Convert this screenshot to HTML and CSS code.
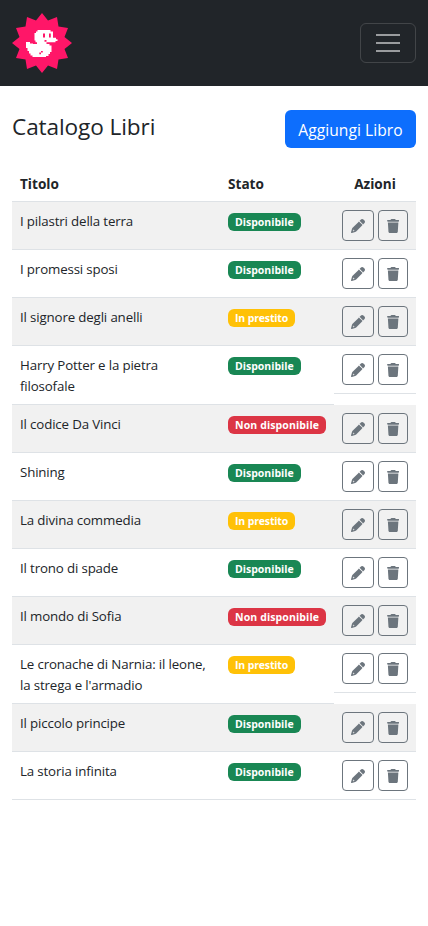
FILE: index.html
```
<!DOCTYPE html>
<html lang="it">
<head>
<meta charset="utf-8">
<meta name="viewport" content="width=device-width, initial-scale=1">
<title>Catalogo Libri</title>
<link rel="stylesheet" href="styles.css">
</head>
<body>
<svg class="defs" aria-hidden="true">
  <symbol id="pencil" viewBox="0 0 512 512"><path d="M410.3 231l11.3-11.3-33.9-33.9-62.1-62.1L291.7 89.8l-11.3 11.3-22.6 22.6L58.6 322.9c-10.4 10.4-18 23.3-22.2 37.4L1 480.7c-2.5 8.4-.2 17.5 6.1 23.7s15.3 8.5 23.7 6.1l120.3-35.4c14.1-4.2 27-11.8 37.4-22.2L387.7 253.7 410.3 231zM130 425l-9 14-40 12-15-15 12-40 14-9v38h38zM362.7 18.7L348.3 33.2 325.7 55.8 314.3 67.1l33.9 33.9 62.1 62.1 33.9 33.9 11.3-11.3 22.6-22.6 14.5-14.5c25-25 25-65.5 0-90.5L453.3 18.7c-25-25-65.5-25-90.5 0z"/></symbol>
  <symbol id="trash" viewBox="0 0 448 512"><path d="M135.2 17.7L128 32H32C14.3 32 0 46.3 0 64S14.3 96 32 96H416c17.7 0 32-14.3 32-32s-14.3-32-32-32H320l-7.2-14.3C307.4 6.8 296.3 0 284.2 0H163.8c-12.1 0-23.2 6.8-28.6 17.7zM416 128H32L53.2 467c1.6 25.3 22.6 45 47.9 45H346.9c25.3 0 46.3-19.7 47.9-45L416 128z"/></symbol>
</svg>
<nav class="navbar">
  <svg class="logo" viewBox="0 0 60 60">
    <path fill="#ff1668" d="M30 0L36 7.5L45 4L46.500 13.500L56 15L52.500 24L60 30L52.500 36L56 45L46.500 46.500L45 56L36 52.500L30 60L24 52.500L15 56L13.500 46.500L4 45L7.500 36L0 30L7.500 24L4 15L13.500 13.500L15 4L24 7.500Z"/>
    <path fill="#fff" fill-rule="evenodd" d="M25.500 17H38.500V18.500H41V24.800H44V26.200H45.500V28H43.500V29.200H34.500V31H37.500V32.500H39.500V39H38V41H36.500V43H34V44H20.500V42.500H18.500V40.500H17V38H15.500V35H14V29H18V30.500H21V31H25V29.200H23.500V27.500H22.500V20H24V18.500H25.500ZM31 20.500V24.500H33V20.500ZM37 20.500V24.500H38.800V20.500ZM32.500 27V28.800H34.500V27ZM29 38V39.500H30.800V38ZM27.300 39.500V41.200H29V39.500Z"/>
  </svg>
  <button class="toggler" aria-label="Menu"><svg viewBox="0 0 30 30"><path d="M3 7h24M3 15h24M3 23h24"/></svg></button>
</nav>
<main class="container">
  <header class="heading"><h1>Catalogo Libri</h1><button class="add">Aggiungi Libro</button></header>
  <table>
    <thead><tr><th class="c-title">Titolo</th><th class="c-state">Stato</th><th class="c-act">Azioni</th></tr></thead>
    <tbody id="rows"></tbody>
  </table>
</main>
<script src="app.js"></script>
</body>
</html>
```
FILE: styles.css
```
* { box-sizing: border-box; }
body { margin: 0; background: #fff; color: #212529; font: 13.3px/21px "Open Sans", sans-serif; }
.defs { display: none; }
.navbar { display: flex; align-items: center; justify-content: space-between; height: 86px; padding: 0 12px; background: #212529; }
.logo { width: 60px; height: 60px; }
.toggler { display: flex; padding: 4px 12px; width: 56px; height: 40px; background: none; border: 1px solid rgba(255,255,255,.15); border-radius: 6px; }
.toggler svg { width: 30px; height: 30px; stroke: rgba(255,255,255,.55); stroke-width: 2; }
.container { padding: 24px 12px 0; }
.heading { display: flex; justify-content: space-between; height: 38px; margin-bottom: 16px; }
h1 { margin: 0; font-size: 22.6px; line-height: 33px; font-weight: 400; letter-spacing: -.1px; }
.add { width: 131px; height: 38px; padding: 2px 0 0; border: 0; border-radius: 6px; background: #0d6efd; color: #fff; font: 15.6px/24px "Open Sans", sans-serif; letter-spacing: .05px; white-space: nowrap; }
table { width: 404px; table-layout: fixed; border-collapse: separate; border-spacing: 0; }
th, td { padding: 9px 8px 7px; text-align: left; vertical-align: top; border-bottom: 1px solid #dee2e6; }
td { letter-spacing: -.15px; }
th { font-weight: 700; font-size: 13.6px; }
.c-title { width: 208px; }
.c-state { width: 114px; }
.c-act { width: 82px; text-align: center; }
tbody tr:nth-child(odd) td { background: #f1f1f1; }
td.actions-cell { padding: 0; border: 0; }
.actions { display: flex; gap: 4px; height: 48px; padding: 8px; border-bottom: 1px solid #dee2e6; }
.btn { display: flex; align-items: center; justify-content: center; width: 32px; height: 31px; padding: 0; background: none; border: 1px solid #6c757d; border-radius: 4px; }
.btn svg { width: 14px; height: 14px; fill: #6c757d; }
.btn.del { width: 30px; }
.btn.del svg { width: 12.25px; }
.badge { display: block; margin-top: 2px; height: 18px; padding: 0 7px; border-radius: 6px; color: #fff; font-size: 10.5px; line-height: 18px; font-weight: 700; letter-spacing: 0; white-space: nowrap; }
.ok { width: 73px; background: #198754; }
.loan { width: 67px; background: #ffc107; letter-spacing: -.15px; }
.no { width: 98px; background: #dc3545; letter-spacing: .12px; }
```
FILE: app.js
```
const labels = { ok: 'Disponibile', loan: 'In prestito', no: 'Non disponibile' };
const books = [
  ['I pilastri della terra', 'ok'],
  ['I promessi sposi', 'ok'],
  ['Il signore degli anelli', 'loan'],
  ['Harry Potter e la pietra filosofale', 'ok'],
  ['Il codice Da Vinci', 'no'],
  ['Shining', 'ok'],
  ['La divina commedia', 'loan'],
  ['Il trono di spade', 'ok'],
  ['Il mondo di Sofia', 'no'],
  ['Le cronache di Narnia: il leone, la strega e l\'armadio', 'loan'],
  ['Il piccolo principe', 'ok'],
  ['La storia infinita', 'ok']
];
document.getElementById('rows').innerHTML = books.map(([title, state]) => `<tr>
  <td>${title}</td>
  <td><span class="badge ${state}">${labels[state]}</span></td>
  <td class="actions-cell"><div class="actions">
    <button class="btn" aria-label="Modifica"><svg><use href="#pencil"/></svg></button>
    <button class="btn del" aria-label="Elimina"><svg><use href="#trash"/></svg></button>
  </div></td>
</tr>`).join('');
```
